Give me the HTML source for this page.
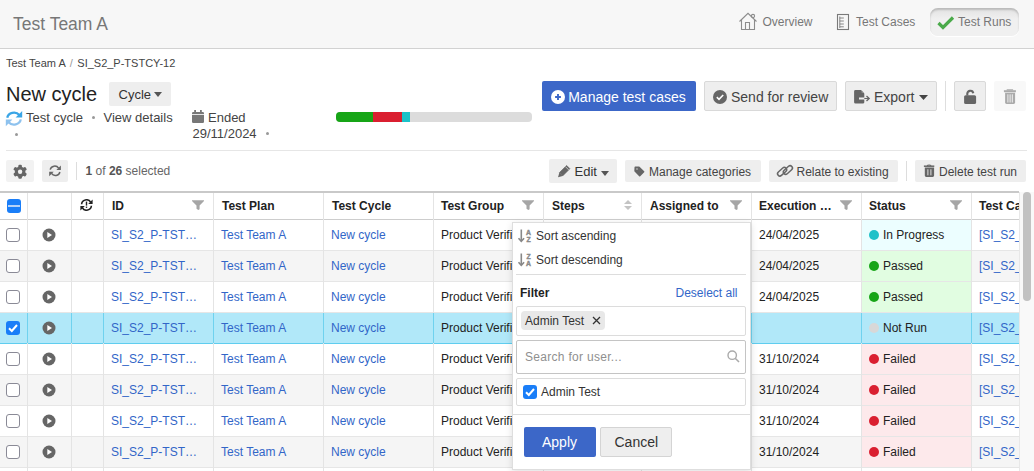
<!DOCTYPE html>
<html><head><meta charset="utf-8">
<style>
*{box-sizing:border-box;margin:0;padding:0}
html,body{width:1034px;height:471px;overflow:hidden;background:#fff;font-family:"Liberation Sans",sans-serif;color:#333}
.t{position:absolute;white-space:nowrap;line-height:1}
.r{position:absolute}
</style></head><body>
<div class="r" style="left:0px;top:0px;width:1034px;height:48px;background:#f7f7f7"></div>
<div class="r" style="left:0px;top:48px;width:1034px;height:1px;background:#d2d2d2"></div>
<div class="t" style="left:13px;top:16.19px;font-size:17.5px;color:#777;">Test Team A</div>
<svg class="r" style="left:736px;top:10px" width="24" height="22" viewBox="736 10 24 22"><g fill="none" stroke="#8c8c8c" stroke-width="1.1"><path d="M739.5 21.5 L748 13.3 L756.5 21.5"/><path d="M741.5 19.5 V29.5 H754.5 V19.5"/><path d="M745.5 29.5 V22.5 H749.5 V29.5"/><circle cx="753" cy="16" r="1.6"/></g></svg>
<div class="t" style="left:762.5px;top:15.84px;font-size:12px;color:#777;">Overview</div>
<svg class="r" style="left:835px;top:12px" width="16" height="20" viewBox="835 12 16 20"><g fill="none" stroke="#7a7a7a"><rect x="837.5" y="14.5" width="11" height="15" stroke-width="1.1"/><path d="M839.8 16.5 V28 M839.8 18 H843.8 M839.8 21 H843.8 M839.8 24 H843.8 M839.8 26.8 H843.8" stroke-width="0.9"/></g></svg>
<div class="t" style="left:856px;top:15.84px;font-size:12px;color:#777;">Test Cases</div>
<div class="r" style="left:930px;top:8px;width:89px;height:28px;background:linear-gradient(#e2e2e2,#f0f0f0 40%,#f0f0f0);border-radius:8px;box-shadow:inset 0 2px 2px rgba(0,0,0,.18),0 1px 1px #fff"></div>
<svg class="r" style="left:937px;top:15px" width="18" height="15" viewBox="0 0 18 15"><path d="M1.5 8 L6 12.5 L16 2.5" fill="none" stroke="#4aaa4a" stroke-width="3.2"/></svg>
<div class="t" style="left:958px;top:15.84px;font-size:12px;color:#777;">Test Runs</div>
<div class="t" style="left:6px;top:57.69px;font-size:11px;color:#444;">Test Team A <span style="color:#999;margin:0 1.5px">/</span> SI_S2_P-TSTCY-12</div>
<div class="t" style="left:6px;top:83.57px;font-size:20px;color:#222;">New cycle</div>
<div class="r" style="left:109px;top:82px;width:62px;height:24px;background:#eeeeee;border-radius:2px"></div>
<div class="t" style="left:118.5px;top:88.00px;font-size:13px;color:#333;">Cycle</div>
<svg class="r" style="left:154px;top:92px" width="8" height="5" viewBox="0 0 8 5"><path d="M0 0 H8 L4 5Z" fill="#555"/></svg>
<svg class="r" style="left:4px;top:109px" width="20" height="19" viewBox="4 109 20 19"><path d="M7.27 117.76 A6.8 6.0 0 0 1 19.36 114.91" fill="none" stroke="#3aa5e6" stroke-width="2.3"/><path d="M22.2 110.9 V117.6 H15.6Z" fill="#3aa5e6"/><path d="M20.73 119.44 A6.8 6.0 0 0 1 8.64 122.29" fill="none" stroke="#8ec2ee" stroke-width="2.3"/><path d="M5.8 126.3 V119.6 H12.4Z" fill="#8ec2ee"/></svg>
<div class="t" style="left:26px;top:110.80px;font-size:13px;color:#444;">Test cycle</div>
<div class="r" style="left:91.5px;top:116px;width:3px;height:3px;background:#999;border-radius:50%"></div>
<div class="t" style="left:103.5px;top:110.80px;font-size:13px;color:#444;">View details</div>
<div class="r" style="left:14.5px;top:132.5px;width:3px;height:3px;background:#999;border-radius:50%"></div>
<svg class="r" style="left:192px;top:110px" width="12" height="13" viewBox="0 0 12 13"><rect x="0" y="2" width="12" height="11" rx="1.2" fill="#777"/><rect x="2.2" y="0" width="1.8" height="3" fill="#777"/><rect x="8" y="0" width="1.8" height="3" fill="#777"/><rect x="0" y="4" width="12" height="0.8" fill="#fff"/></svg>
<div class="t" style="left:208px;top:110.80px;font-size:13px;color:#444;">Ended</div>
<div class="t" style="left:192.5px;top:127.00px;font-size:13px;color:#444;">29/11/2024</div>
<div class="r" style="left:265.5px;top:132px;width:3px;height:3px;background:#999;border-radius:50%"></div>
<div class="r" style="left:336px;top:112px;width:196px;height:10px;border-radius:4px;overflow:hidden;background:#dcdcdc"><div class="r" style="left:0;top:0;width:37px;height:10px;background:#17a517"></div><div class="r" style="left:37px;top:0;width:29px;height:10px;background:#da1f30"></div><div class="r" style="left:66px;top:0;width:8px;height:10px;background:#1cc2c9"></div></div>
<div class="r" style="left:542px;top:81px;width:154px;height:30px;background:#3c67c8;border-radius:2px"></div>
<svg class="r" style="left:551px;top:90px" width="14" height="14" viewBox="0 0 14 14"><circle cx="7" cy="7" r="7" fill="#fff"/><path d="M7 4.1 V9.9 M4.1 7 H9.9" stroke="#3c67c8" stroke-width="1.9"/></svg>
<div class="t" style="left:568.2px;top:90.45px;font-size:14px;color:#fff;">Manage test cases</div>
<div class="r" style="left:704px;top:81px;width:133px;height:30px;background:#eeeeee;border:1px solid #d9d9d9;border-radius:2px"></div>
<svg class="r" style="left:713px;top:90px" width="14" height="14" viewBox="0 0 14 14"><circle cx="7" cy="7" r="7" fill="#666"/><path d="M3.8 7.2 L6 9.3 L10.2 5" fill="none" stroke="#fff" stroke-width="1.6"/></svg>
<div class="t" style="left:731px;top:90.15px;font-size:14px;color:#444;">Send for review</div>
<div class="r" style="left:845px;top:81px;width:92px;height:30px;background:#eeeeee;border:1px solid #d9d9d9;border-radius:2px"></div>
<svg class="r" style="left:850px;top:86px" width="24" height="22" viewBox="850 86 24 22"><path d="M855.5 90 H861 L864.3 93.5 V97.6 H859 V99.4 H864.3 V102.2 A1.4 1.4 0 0 1 862.9 103.6 H855.5 A1.4 1.4 0 0 1 854.1 102.2 V91.4 A1.4 1.4 0 0 1 855.5 90Z" fill="#666"/><path d="M861.6 90.3 L864 92.8 H861.6Z" fill="#999"/><path d="M864.3 98.5 H869" stroke="#666" stroke-width="1.1"/><path d="M866.5 96 L869.2 98.5 L866.5 101" fill="none" stroke="#666" stroke-width="1.3"/></svg>
<div class="t" style="left:874px;top:90.15px;font-size:14px;color:#444;">Export</div>
<svg class="r" style="left:919px;top:95px" width="9" height="5" viewBox="0 0 9 5"><path d="M0 0 H9 L4.5 5Z" fill="#444"/></svg>
<div class="r" style="left:945px;top:81px;width:1px;height:30px;background:#dedede"></div>
<div class="r" style="left:954px;top:81px;width:32px;height:30px;background:#eeeeee;border:1px solid #d9d9d9;border-radius:2px"></div>
<svg class="r" style="left:960px;top:86px" width="20" height="20" viewBox="960 86 20 20"><path d="M967.3 95.5 V94.4 A3 3 0 0 1 973.3 93.3" fill="none" stroke="#666" stroke-width="2.1"/><rect x="964.1" y="95.2" width="12" height="8.8" rx="1.6" fill="#666"/></svg>
<div class="r" style="left:994px;top:81px;width:32px;height:30px;background:#f8f8f8;border-radius:2px"></div>
<svg class="r" style="left:1000px;top:86px" width="20" height="20" viewBox="1000 86 20 20"><path d="M1003.9 91.2 H1015.9" stroke="#aaa" stroke-width="2"/><path d="M1007.3 90.6 V89.9 H1012.5 V90.6" stroke="#aaa" stroke-width="1.2" fill="none"/><path d="M1005.1 92.8 H1015.1 V102.6 A1.4 1.4 0 0 1 1013.7 104 H1006.5 A1.4 1.4 0 0 1 1005.1 102.6Z" fill="#aaa"/><path d="M1007.9 94.3 V102.5 M1010.1 94.3 V102.5 M1012.3 94.3 V102.5" stroke="#f8f8f8" stroke-width="0.9"/></svg>
<div class="r" style="left:6px;top:150px;width:1021px;height:1px;background:#e6e6e6"></div>
<div class="r" style="left:6px;top:160px;width:28px;height:22px;background:#f2f2f2;border-radius:2px"></div>
<svg class="r" style="left:10px;top:162px" width="20" height="20" viewBox="10 162 20 20"><g fill="#666"><rect x="18.3" y="164.7" width="3.6" height="14" rx="1.2" transform="rotate(0 20.1 171.7)"/><rect x="18.3" y="164.7" width="3.6" height="14" rx="1.2" transform="rotate(60 20.1 171.7)"/><rect x="18.3" y="164.7" width="3.6" height="14" rx="1.2" transform="rotate(120 20.1 171.7)"/><circle cx="20.1" cy="171.7" r="5.3"/></g><circle cx="20.1" cy="171.7" r="2.2" fill="#f2f2f2"/></svg>
<div class="r" style="left:42px;top:160px;width:26px;height:22px;background:#eeeeee;border-radius:2px"></div>
<svg class="r" style="left:45px;top:161px" width="20" height="20" viewBox="45 161 20 20"><g fill="none" stroke="#666" stroke-width="1.5"><path d="M50.2 169.6 A4.6 4.4 0 0 1 58.6 168.2"/><path d="M59.9 172 A4.6 4.4 0 0 1 51.5 173.4"/></g><path d="M60.9 165.5 V170 H56.4Z" fill="#666"/><path d="M49.2 176.2 V171.7 H53.7Z" fill="#666"/></svg>
<div class="r" style="left:76px;top:162px;width:1px;height:18px;background:#dddddd"></div>
<div class="t" style="left:85.5px;top:165.04px;font-size:12px;color:#666;"><b style="color:#555">1</b> of <b style="color:#555">26</b> selected</div>
<div class="r" style="left:549px;top:159px;width:68px;height:24px;background:#eeeeee;border-radius:2px"></div>
<svg class="r" style="left:555px;top:162px" width="18" height="18" viewBox="555 162 18 18"><path d="M559.4 172.6 L566.6 165.4 L569.9 168.7 L562.7 175.9 Z" fill="#666" stroke="#666" stroke-width="0.6" stroke-linejoin="round"/><path d="M559.4 172.6 L558 177.3 L562.7 175.9Z" fill="#666"/><path d="M565.4 166.6 L568.7 169.9" stroke="#eee" stroke-width="0.7"/></svg>
<div class="t" style="left:574.5px;top:165.00px;font-size:13px;color:#333;">Edit</div>
<svg class="r" style="left:601px;top:171px" width="8" height="5" viewBox="0 0 8 5"><path d="M0 0 H8 L4 5Z" fill="#555"/></svg>
<div class="r" style="left:625px;top:160px;width:136px;height:22px;background:#eeeeee;border-radius:2px"></div>
<svg class="r" style="left:630px;top:162px" width="18" height="18" viewBox="630 162 18 18"><path d="M635.3 167.2 H639 L643.6 171.8 L639.7 175.6 L635.1 171 Z" fill="#666" stroke="#666" stroke-width="1.6" stroke-linejoin="round"/><circle cx="637" cy="169" r="0.9" fill="#aaa"/></svg>
<div class="t" style="left:649px;top:165.84px;font-size:12px;color:#444;">Manage categories</div>
<div class="r" style="left:769px;top:160px;width:129px;height:22px;background:#eeeeee;border-radius:2px"></div>
<svg class="r" style="left:774px;top:160px" width="24" height="22" viewBox="774 160 24 22"><g fill="none" stroke="#666" stroke-width="1.5"><rect x="776.85" y="169.4" width="10.5" height="4.6" rx="2.3" transform="rotate(-42 782.1 171.7)"/><rect x="782.65" y="167.7" width="10.5" height="4.6" rx="2.3" transform="rotate(-42 787.9 170)"/></g></svg>
<div class="t" style="left:796.5px;top:165.84px;font-size:12px;color:#444;">Relate to existing</div>
<div class="r" style="left:906px;top:161px;width:1px;height:20px;background:#dddddd"></div>
<div class="r" style="left:915px;top:160px;width:111px;height:22px;background:#eeeeee;border-radius:2px"></div>
<svg class="r" style="left:920px;top:160px" width="18" height="20" viewBox="920 160 18 20"><path d="M923.9 166.2 H934.3" stroke="#666" stroke-width="1.5"/><path d="M927 165.6 Q929.1 164.5 931.2 165.6" stroke="#666" stroke-width="1.1" fill="none"/><path d="M924.8 167.6 H934.1 V175.5 A1.4 1.4 0 0 1 932.7 176.9 H926.2 A1.4 1.4 0 0 1 924.8 175.5Z" fill="#666"/><path d="M927.9 169.3 V175.3 M930.9 169.3 V175.3" stroke="#eee" stroke-width="0.9"/></svg>
<div class="t" style="left:939px;top:165.84px;font-size:12px;color:#444;">Delete test run</div>
<div class="r" style="left:0px;top:191px;width:1019px;height:2px;background:#c9c9c9"></div>
<div class="r" style="left:0px;top:219px;width:1019px;height:1px;background:#cdcdcd"></div>
<div class="r" style="left:7px;top:199px;width:14px;height:14px;background:#1a7ef8;border-radius:3px"></div>
<div class="r" style="left:8.3px;top:205px;width:11.7px;height:2px;background:#b5d2f8"></div>
<svg class="r" style="left:80px;top:199px" width="13" height="12" viewBox="0 0 13 12"><g fill="none" stroke="#222" stroke-width="1.6"><path d="M1.6 5.2 A4.8 4.6 0 0 1 10.6 3.2"/><path d="M11.4 6.8 A4.8 4.6 0 0 1 2.4 8.8"/></g><path d="M12.6 0.6 V5 H8.2Z" fill="#222"/><path d="M0.4 11.4 V7 H4.8Z" fill="#222"/><rect x="5.8" y="2.6" width="1.4" height="4" fill="#222"/><rect x="5.8" y="7.6" width="1.4" height="1.3" fill="#222"/></svg>
<div class="t" style="left:112px;top:199.84px;font-size:12px;color:#222;font-weight:bold;">ID</div>
<svg class="r" style="left:192px;top:200px" width="12" height="10" viewBox="0 0 12 10"><path d="M0 0.2 H12 V0.9 L7.6 5.4 V9.3 L6.3 10 L4.5 8.7 V5.4 L0 0.9Z" fill="#a6a6a6"/></svg>
<div class="t" style="left:222px;top:199.84px;font-size:12px;color:#222;font-weight:bold;">Test Plan</div>
<div class="t" style="left:332px;top:199.84px;font-size:12px;color:#222;font-weight:bold;">Test Cycle</div>
<div class="t" style="left:441px;top:199.84px;font-size:12px;color:#222;font-weight:bold;">Test Group</div>
<svg class="r" style="left:522px;top:200px" width="12" height="10" viewBox="0 0 12 10"><path d="M0 0.2 H12 V0.9 L7.6 5.4 V9.3 L6.3 10 L4.5 8.7 V5.4 L0 0.9Z" fill="#a6a6a6"/></svg>
<div class="t" style="left:552px;top:199.84px;font-size:12px;color:#222;font-weight:bold;">Steps</div>
<svg class="r" style="left:623px;top:199px" width="10" height="12" viewBox="0 0 10 12"><path d="M1 5 L5 1 L9 5Z M1 7 L5 11 L9 7Z" fill="#c4c4c4"/></svg>
<div class="t" style="left:650px;top:199.84px;font-size:12px;color:#222;font-weight:bold;">Assigned to</div>
<svg class="r" style="left:730px;top:200px" width="12" height="10" viewBox="0 0 12 10"><path d="M0 0.2 H12 V0.9 L7.6 5.4 V9.3 L6.3 10 L4.5 8.7 V5.4 L0 0.9Z" fill="#a6a6a6"/></svg>
<div class="t" style="left:759px;top:199.84px;font-size:12px;color:#222;font-weight:bold;">Execution&nbsp;&hellip;</div>
<svg class="r" style="left:840px;top:200px" width="12" height="10" viewBox="0 0 12 10"><path d="M0 0.2 H12 V0.9 L7.6 5.4 V9.3 L6.3 10 L4.5 8.7 V5.4 L0 0.9Z" fill="#a6a6a6"/></svg>
<div class="t" style="left:869px;top:199.84px;font-size:12px;color:#222;font-weight:bold;">Status</div>
<svg class="r" style="left:950px;top:200px" width="12" height="10" viewBox="0 0 12 10"><path d="M0 0.2 H12 V0.9 L7.6 5.4 V9.3 L6.3 10 L4.5 8.7 V5.4 L0 0.9Z" fill="#a6a6a6"/></svg>
<div class="t" style="left:979px;top:199.84px;font-size:12px;color:#222;font-weight:bold;">Test Cases</div>
<div class="r" style="left:0px;top:220px;width:1019px;height:30px;background:#ffffff"></div>
<div class="r" style="left:862px;top:220px;width:109px;height:30px;background:#ecfeff"></div>
<div class="r" style="left:0px;top:250px;width:1019px;height:1px;background:#e6e6e6"></div>
<div class="r" style="left:6px;top:228px;width:14px;height:14px;background:#fff;border:1px solid #8a8a96;border-radius:3px"></div>
<svg class="r" style="left:42px;top:228px" width="14" height="14" viewBox="0 0 14 14"><circle cx="7" cy="7" r="6.5" fill="#666"/><path d="M5.3 4 L10 7 L5.3 10Z" fill="#fff"/></svg>
<div class="t" style="left:111px;top:229.34px;font-size:12px;color:#3266c8;">SI_S2_P-TST&hellip;</div>
<div class="t" style="left:221px;top:229.34px;font-size:12px;color:#3266c8;">Test Team A</div>
<div class="t" style="left:331px;top:229.34px;font-size:12px;color:#3266c8;">New cycle</div>
<div class="t" style="left:441px;top:229.34px;font-size:12px;color:#222;">Product Verification</div>
<div class="t" style="left:759px;top:229.34px;font-size:12px;color:#222;">24/04/2025</div>
<div class="r" style="left:869px;top:230px;width:10px;height:10px;background:#1fc1c9;border-radius:50%"></div>
<div class="t" style="left:883px;top:229.34px;font-size:12px;color:#222;">In Progress</div>
<div class="t" style="left:979px;top:229.34px;font-size:12px;color:#3266c8;">[SI_S2_P-TSTCY-12]</div>
<div class="r" style="left:0px;top:251px;width:1019px;height:30px;background:#f5f5f5"></div>
<div class="r" style="left:862px;top:251px;width:109px;height:30px;background:#e1fde1"></div>
<div class="r" style="left:0px;top:281px;width:1019px;height:1px;background:#e6e6e6"></div>
<div class="r" style="left:6px;top:259px;width:14px;height:14px;background:#fff;border:1px solid #8a8a96;border-radius:3px"></div>
<svg class="r" style="left:42px;top:259px" width="14" height="14" viewBox="0 0 14 14"><circle cx="7" cy="7" r="6.5" fill="#666"/><path d="M5.3 4 L10 7 L5.3 10Z" fill="#fff"/></svg>
<div class="t" style="left:111px;top:260.34px;font-size:12px;color:#3266c8;">SI_S2_P-TST&hellip;</div>
<div class="t" style="left:221px;top:260.34px;font-size:12px;color:#3266c8;">Test Team A</div>
<div class="t" style="left:331px;top:260.34px;font-size:12px;color:#3266c8;">New cycle</div>
<div class="t" style="left:441px;top:260.34px;font-size:12px;color:#222;">Product Verification</div>
<div class="t" style="left:759px;top:260.34px;font-size:12px;color:#222;">24/04/2025</div>
<div class="r" style="left:869px;top:261px;width:10px;height:10px;background:#17a517;border-radius:50%"></div>
<div class="t" style="left:883px;top:260.34px;font-size:12px;color:#222;">Passed</div>
<div class="t" style="left:979px;top:260.34px;font-size:12px;color:#3266c8;">[SI_S2_P-TSTCY-12]</div>
<div class="r" style="left:0px;top:282px;width:1019px;height:30px;background:#ffffff"></div>
<div class="r" style="left:862px;top:282px;width:109px;height:30px;background:#e1fde1"></div>
<div class="r" style="left:0px;top:312px;width:1019px;height:1px;background:#e6e6e6"></div>
<div class="r" style="left:6px;top:290px;width:14px;height:14px;background:#fff;border:1px solid #8a8a96;border-radius:3px"></div>
<svg class="r" style="left:42px;top:290px" width="14" height="14" viewBox="0 0 14 14"><circle cx="7" cy="7" r="6.5" fill="#666"/><path d="M5.3 4 L10 7 L5.3 10Z" fill="#fff"/></svg>
<div class="t" style="left:111px;top:291.34px;font-size:12px;color:#3266c8;">SI_S2_P-TST&hellip;</div>
<div class="t" style="left:221px;top:291.34px;font-size:12px;color:#3266c8;">Test Team A</div>
<div class="t" style="left:331px;top:291.34px;font-size:12px;color:#3266c8;">New cycle</div>
<div class="t" style="left:441px;top:291.34px;font-size:12px;color:#222;">Product Verification</div>
<div class="t" style="left:759px;top:291.34px;font-size:12px;color:#222;">24/04/2025</div>
<div class="r" style="left:869px;top:292px;width:10px;height:10px;background:#17a517;border-radius:50%"></div>
<div class="t" style="left:883px;top:291.34px;font-size:12px;color:#222;">Passed</div>
<div class="t" style="left:979px;top:291.34px;font-size:12px;color:#3266c8;">[SI_S2_P-TSTCY-12]</div>
<div class="r" style="left:0px;top:313px;width:1019px;height:30px;background:#b1e8f9"></div>
<div class="r" style="left:0px;top:343px;width:1019px;height:1px;background:#5fcdef"></div>
<div class="r" style="left:0px;top:312px;width:1019px;height:1px;background:#e6e6e6"></div>
<div class="r" style="left:6px;top:321px;width:14px;height:14px;background:#1a7ef8;border-radius:3px"></div>
<svg class="r" style="left:6px;top:321px" width="14" height="14" viewBox="0 0 14 14"><path d="M3 7.2 L5.8 10 L11 4" fill="none" stroke="#fff" stroke-width="2"/></svg>
<svg class="r" style="left:42px;top:321px" width="14" height="14" viewBox="0 0 14 14"><circle cx="7" cy="7" r="6.5" fill="#666"/><path d="M5.3 4 L10 7 L5.3 10Z" fill="#fff"/></svg>
<div class="t" style="left:111px;top:322.34px;font-size:12px;color:#3266c8;">SI_S2_P-TST&hellip;</div>
<div class="t" style="left:221px;top:322.34px;font-size:12px;color:#3266c8;">Test Team A</div>
<div class="t" style="left:331px;top:322.34px;font-size:12px;color:#3266c8;">New cycle</div>
<div class="t" style="left:441px;top:322.34px;font-size:12px;color:#222;">Product Verification</div>
<div class="r" style="left:869px;top:323px;width:10px;height:10px;background:#d8d8d8;border-radius:50%"></div>
<div class="t" style="left:883px;top:322.34px;font-size:12px;color:#222;">Not Run</div>
<div class="t" style="left:979px;top:322.34px;font-size:12px;color:#3266c8;">[SI_S2_P-TSTCY-12]</div>
<div class="r" style="left:0px;top:344px;width:1019px;height:30px;background:#ffffff"></div>
<div class="r" style="left:862px;top:344px;width:109px;height:30px;background:#fde9eb"></div>
<div class="r" style="left:0px;top:374px;width:1019px;height:1px;background:#e6e6e6"></div>
<div class="r" style="left:6px;top:352px;width:14px;height:14px;background:#fff;border:1px solid #8a8a96;border-radius:3px"></div>
<svg class="r" style="left:42px;top:352px" width="14" height="14" viewBox="0 0 14 14"><circle cx="7" cy="7" r="6.5" fill="#666"/><path d="M5.3 4 L10 7 L5.3 10Z" fill="#fff"/></svg>
<div class="t" style="left:111px;top:353.34px;font-size:12px;color:#3266c8;">SI_S2_P-TST&hellip;</div>
<div class="t" style="left:221px;top:353.34px;font-size:12px;color:#3266c8;">Test Team A</div>
<div class="t" style="left:331px;top:353.34px;font-size:12px;color:#3266c8;">New cycle</div>
<div class="t" style="left:441px;top:353.34px;font-size:12px;color:#222;">Product Verification</div>
<div class="t" style="left:759px;top:353.34px;font-size:12px;color:#222;">31/10/2024</div>
<div class="r" style="left:869px;top:354px;width:10px;height:10px;background:#da1f30;border-radius:50%"></div>
<div class="t" style="left:883px;top:353.34px;font-size:12px;color:#222;">Failed</div>
<div class="t" style="left:979px;top:353.34px;font-size:12px;color:#3266c8;">[SI_S2_P-TSTCY-12]</div>
<div class="r" style="left:0px;top:375px;width:1019px;height:30px;background:#f5f5f5"></div>
<div class="r" style="left:862px;top:375px;width:109px;height:30px;background:#fde9eb"></div>
<div class="r" style="left:0px;top:405px;width:1019px;height:1px;background:#e6e6e6"></div>
<div class="r" style="left:6px;top:383px;width:14px;height:14px;background:#fff;border:1px solid #8a8a96;border-radius:3px"></div>
<svg class="r" style="left:42px;top:383px" width="14" height="14" viewBox="0 0 14 14"><circle cx="7" cy="7" r="6.5" fill="#666"/><path d="M5.3 4 L10 7 L5.3 10Z" fill="#fff"/></svg>
<div class="t" style="left:111px;top:384.34px;font-size:12px;color:#3266c8;">SI_S2_P-TST&hellip;</div>
<div class="t" style="left:221px;top:384.34px;font-size:12px;color:#3266c8;">Test Team A</div>
<div class="t" style="left:331px;top:384.34px;font-size:12px;color:#3266c8;">New cycle</div>
<div class="t" style="left:441px;top:384.34px;font-size:12px;color:#222;">Product Verification</div>
<div class="t" style="left:759px;top:384.34px;font-size:12px;color:#222;">31/10/2024</div>
<div class="r" style="left:869px;top:385px;width:10px;height:10px;background:#da1f30;border-radius:50%"></div>
<div class="t" style="left:883px;top:384.34px;font-size:12px;color:#222;">Failed</div>
<div class="t" style="left:979px;top:384.34px;font-size:12px;color:#3266c8;">[SI_S2_P-TSTCY-12]</div>
<div class="r" style="left:0px;top:406px;width:1019px;height:30px;background:#ffffff"></div>
<div class="r" style="left:862px;top:406px;width:109px;height:30px;background:#fde9eb"></div>
<div class="r" style="left:0px;top:436px;width:1019px;height:1px;background:#e6e6e6"></div>
<div class="r" style="left:6px;top:414px;width:14px;height:14px;background:#fff;border:1px solid #8a8a96;border-radius:3px"></div>
<svg class="r" style="left:42px;top:414px" width="14" height="14" viewBox="0 0 14 14"><circle cx="7" cy="7" r="6.5" fill="#666"/><path d="M5.3 4 L10 7 L5.3 10Z" fill="#fff"/></svg>
<div class="t" style="left:111px;top:415.34px;font-size:12px;color:#3266c8;">SI_S2_P-TST&hellip;</div>
<div class="t" style="left:221px;top:415.34px;font-size:12px;color:#3266c8;">Test Team A</div>
<div class="t" style="left:331px;top:415.34px;font-size:12px;color:#3266c8;">New cycle</div>
<div class="t" style="left:441px;top:415.34px;font-size:12px;color:#222;">Product Verification</div>
<div class="t" style="left:759px;top:415.34px;font-size:12px;color:#222;">31/10/2024</div>
<div class="r" style="left:869px;top:416px;width:10px;height:10px;background:#da1f30;border-radius:50%"></div>
<div class="t" style="left:883px;top:415.34px;font-size:12px;color:#222;">Failed</div>
<div class="t" style="left:979px;top:415.34px;font-size:12px;color:#3266c8;">[SI_S2_P-TSTCY-12]</div>
<div class="r" style="left:0px;top:437px;width:1019px;height:30px;background:#f5f5f5"></div>
<div class="r" style="left:862px;top:437px;width:109px;height:30px;background:#fde9eb"></div>
<div class="r" style="left:0px;top:467px;width:1019px;height:1px;background:#e6e6e6"></div>
<div class="r" style="left:6px;top:445px;width:14px;height:14px;background:#fff;border:1px solid #8a8a96;border-radius:3px"></div>
<svg class="r" style="left:42px;top:445px" width="14" height="14" viewBox="0 0 14 14"><circle cx="7" cy="7" r="6.5" fill="#666"/><path d="M5.3 4 L10 7 L5.3 10Z" fill="#fff"/></svg>
<div class="t" style="left:111px;top:446.34px;font-size:12px;color:#3266c8;">SI_S2_P-TST&hellip;</div>
<div class="t" style="left:221px;top:446.34px;font-size:12px;color:#3266c8;">Test Team A</div>
<div class="t" style="left:331px;top:446.34px;font-size:12px;color:#3266c8;">New cycle</div>
<div class="t" style="left:441px;top:446.34px;font-size:12px;color:#222;">Product Verification</div>
<div class="t" style="left:759px;top:446.34px;font-size:12px;color:#222;">31/10/2024</div>
<div class="r" style="left:869px;top:447px;width:10px;height:10px;background:#da1f30;border-radius:50%"></div>
<div class="t" style="left:883px;top:446.34px;font-size:12px;color:#222;">Failed</div>
<div class="t" style="left:979px;top:446.34px;font-size:12px;color:#3266c8;">[SI_S2_P-TSTCY-12]</div>
<div class="r" style="left:0px;top:468px;width:1019px;height:3px;background:#fff"></div>
<div class="r" style="left:27px;top:193px;width:1px;height:278px;background:#e4e4e4"></div>
<div class="r" style="left:71px;top:193px;width:1px;height:278px;background:#e4e4e4"></div>
<div class="r" style="left:103px;top:193px;width:1px;height:278px;background:#e4e4e4"></div>
<div class="r" style="left:213px;top:193px;width:1px;height:278px;background:#e4e4e4"></div>
<div class="r" style="left:323px;top:193px;width:1px;height:278px;background:#e4e4e4"></div>
<div class="r" style="left:433px;top:193px;width:1px;height:278px;background:#e4e4e4"></div>
<div class="r" style="left:543px;top:193px;width:1px;height:278px;background:#e4e4e4"></div>
<div class="r" style="left:641px;top:193px;width:1px;height:278px;background:#e4e4e4"></div>
<div class="r" style="left:751px;top:193px;width:1px;height:278px;background:#e4e4e4"></div>
<div class="r" style="left:861px;top:193px;width:1px;height:278px;background:#e4e4e4"></div>
<div class="r" style="left:971px;top:193px;width:1px;height:278px;background:#e4e4e4"></div>
<div class="r" style="left:27px;top:313px;width:1px;height:30px;background:#6fd2ef"></div>
<div class="r" style="left:71px;top:313px;width:1px;height:30px;background:#6fd2ef"></div>
<div class="r" style="left:103px;top:313px;width:1px;height:30px;background:#6fd2ef"></div>
<div class="r" style="left:213px;top:313px;width:1px;height:30px;background:#6fd2ef"></div>
<div class="r" style="left:323px;top:313px;width:1px;height:30px;background:#6fd2ef"></div>
<div class="r" style="left:433px;top:313px;width:1px;height:30px;background:#6fd2ef"></div>
<div class="r" style="left:543px;top:313px;width:1px;height:30px;background:#6fd2ef"></div>
<div class="r" style="left:641px;top:313px;width:1px;height:30px;background:#6fd2ef"></div>
<div class="r" style="left:751px;top:313px;width:1px;height:30px;background:#6fd2ef"></div>
<div class="r" style="left:861px;top:313px;width:1px;height:30px;background:#6fd2ef"></div>
<div class="r" style="left:971px;top:313px;width:1px;height:30px;background:#6fd2ef"></div>
<div class="r" style="left:1019px;top:186px;width:15px;height:285px;background:#fff"></div>
<div class="r" style="left:1020px;top:192px;width:14px;height:279px;background:#f9f9f9"></div>
<div class="r" style="left:1019px;top:192px;width:1px;height:279px;background:#e8e8e8"></div>
<div class="r" style="left:1023px;top:192px;width:8px;height:109px;background:#c2c2c2;border-radius:4px"></div>
<div class="r" style="left:512px;top:222px;width:239px;height:248px;background:#fff;border:1px solid #dedede;box-shadow:0 2px 7px rgba(0,0,0,.13)"></div>
<svg class="r" style="left:516px;top:229px" width="18" height="16" viewBox="516 229 18 16"><path d="M521.3 229.5 V241.2" stroke="#888" stroke-width="1.6"/><path d="M518.5 238.3 L521.3 241.4 L524.1 238.3" fill="none" stroke="#888" stroke-width="1.6"/><text x="528.55" y="234.9" font-family="Liberation Sans" font-weight="bold" font-size="6.8" fill="#8a8a8a" stroke="#8a8a8a" stroke-width="0.45" text-anchor="middle">A</text><text x="528.55" y="241.5" font-family="Liberation Sans" font-weight="bold" font-size="6.8" fill="#8a8a8a" stroke="#8a8a8a" stroke-width="0.45" text-anchor="middle">Z</text></svg>
<div class="t" style="left:536px;top:229.84px;font-size:12px;color:#333;">Sort ascending</div>
<svg class="r" style="left:516px;top:253px" width="18" height="16" viewBox="516 253 18 16"><path d="M521.3 253.5 V265.2" stroke="#888" stroke-width="1.6"/><path d="M518.5 262.3 L521.3 265.4 L524.1 262.3" fill="none" stroke="#888" stroke-width="1.6"/><text x="528.55" y="258.9" font-family="Liberation Sans" font-weight="bold" font-size="6.8" fill="#8a8a8a" stroke="#8a8a8a" stroke-width="0.45" text-anchor="middle">Z</text><text x="528.55" y="265.5" font-family="Liberation Sans" font-weight="bold" font-size="6.8" fill="#8a8a8a" stroke="#8a8a8a" stroke-width="0.45" text-anchor="middle">A</text></svg>
<div class="t" style="left:536px;top:253.84px;font-size:12px;color:#333;">Sort descending</div>
<div class="r" style="left:516px;top:274px;width:230px;height:1px;background:#dddddd"></div>
<div class="t" style="left:520px;top:286.84px;font-size:12px;color:#222;font-weight:bold;">Filter</div>
<div class="t" style="left:675.5px;top:286.84px;font-size:12px;color:#3266c8;">Deselect all</div>
<div class="r" style="left:516px;top:306px;width:230px;height:30px;background:#fff;border:1px solid #dcdcdc;border-radius:2px"></div>
<div class="r" style="left:521px;top:311px;width:84px;height:19px;background:#e8e8e8;border-radius:4px"></div>
<div class="t" style="left:525px;top:315.34px;font-size:12px;color:#333;">Admin Test</div>
<svg class="r" style="left:592px;top:316px" width="9" height="9" viewBox="0 0 9 9"><path d="M1 1 L8 8 M8 1 L1 8" stroke="#333" stroke-width="1.3"/></svg>
<div class="r" style="left:516px;top:340px;width:230px;height:34px;background:#fff;border:1px solid #c4c4c4;border-radius:2px"></div>
<div class="t" style="left:525px;top:350.84px;font-size:12px;color:#8f8f8f;letter-spacing:0.3px;">Search for user...</div>
<svg class="r" style="left:727px;top:350px" width="13" height="13" viewBox="0 0 13 13"><circle cx="5.2" cy="5.2" r="4.2" fill="none" stroke="#aaa" stroke-width="1.4"/><path d="M8.2 8.2 L12 12" stroke="#aaa" stroke-width="1.6"/></svg>
<div class="r" style="left:516px;top:378px;width:230px;height:28px;background:#fff;border:1px solid #dcdcdc;border-radius:2px"></div>
<div class="r" style="left:523px;top:385px;width:14px;height:14px;background:#1a7ef8;border-radius:3px"></div>
<svg class="r" style="left:523px;top:385px" width="14" height="14" viewBox="0 0 14 14"><path d="M3 7.2 L5.8 10 L11 4" fill="none" stroke="#fff" stroke-width="2"/></svg>
<div class="t" style="left:541px;top:385.84px;font-size:12px;color:#333;">Admin Test</div>
<div class="r" style="left:513px;top:414px;width:237px;height:1px;background:#dddddd"></div>
<div class="r" style="left:524px;top:427px;width:72px;height:30px;background:#3c67c8;border-radius:2px"></div>
<div class="t" style="left:542px;top:435.15px;font-size:14px;color:#fff;">Apply</div>
<div class="r" style="left:600px;top:427px;width:72px;height:30px;background:#eeeeee;border:1px solid #d4d4d4;border-radius:2px"></div>
<div class="t" style="left:614.5px;top:435.15px;font-size:14px;color:#333;">Cancel</div>
</body></html>
